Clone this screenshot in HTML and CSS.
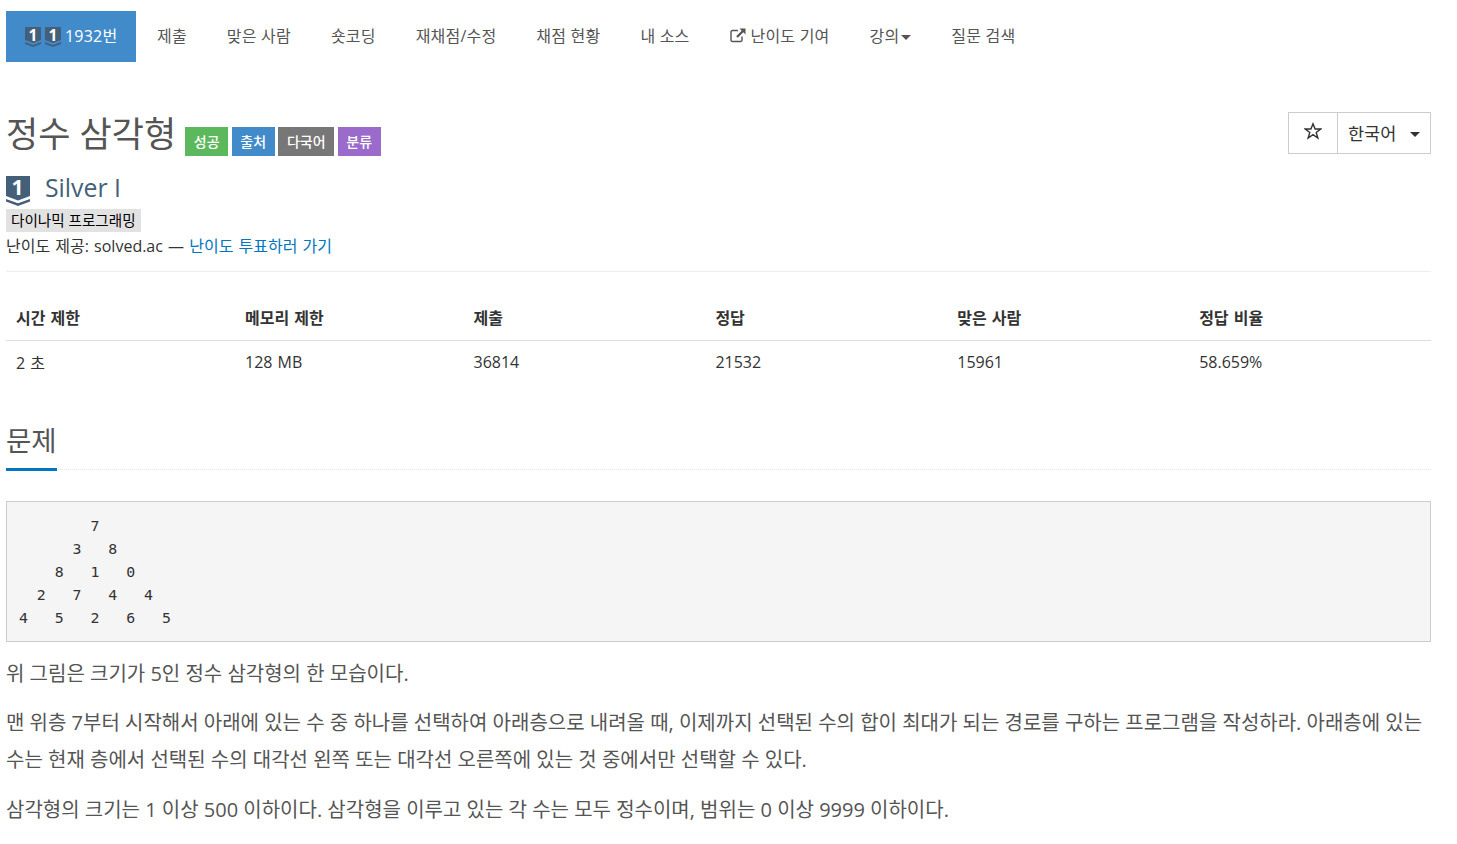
FILE: index.html
```html
<!DOCTYPE html>
<html lang="ko">
<head>
<meta charset="utf-8">
<title>정수 삼각형</title>
<link rel="stylesheet" href="styles.css">
</head>
<body>
<div class="page">
  <ul class="nav">
    <li class="nav-item active">
      <span class="tier small"><svg viewBox="0 0 16 20"><path class="tier-fill" d="M0 0H16V13L8 16L0 13Z"/><path class="tier-chev" d="M0 15L8 18L16 15V17L8 20L0 17Z"/></svg><span class="tier-num">1</span></span>
      <span class="tier small"><svg viewBox="0 0 16 20"><path class="tier-fill" d="M0 0H16V13L8 16L0 13Z"/><path class="tier-chev" d="M0 15L8 18L16 15V17L8 20L0 17Z"/></svg><span class="tier-num">1</span></span>
      <span>1932번</span>
    </li>
    <li class="nav-item">제출</li>
    <li class="nav-item">맞은 사람</li>
    <li class="nav-item">숏코딩</li>
    <li class="nav-item">재채점/수정</li>
    <li class="nav-item">채점 현황</li>
    <li class="nav-item">내 소스</li>
    <li class="nav-item"><svg class="ext" viewBox="0 0 16 16"><path d="M12 9.500V13.200A1.300 1.300 0 0 1 10.700 14.500H2.300A1.300 1.300 0 0 1 1 13.200V4.800A1.300 1.300 0 0 1 2.300 3.500H8" class="ext-line"/><path d="M9.500 1.500H15.500V7.500L13.300 5.300L7.800 10.800L6.200 9.200L11.700 3.700Z" class="ext-fill"/></svg>난이도 기여</li>
    <li class="nav-item">강의<span class="caret nav-caret"></span></li>
    <li class="nav-item">질문 검색</li>
  </ul>

  <header class="title-row">
    <div class="title-left">
      <h1 class="title">정수 삼각형</h1>
      <span class="label green">성공</span>
      <span class="label blue">출처</span>
      <span class="label gray">다국어</span>
      <span class="label purple">분류</span>
    </div>
    <div class="lang-group">
      <div class="star-btn"><svg class="star" viewBox="0 0 18 18"><path d="M9 1.800L11.100 7H16.700L12.200 10.400L13.900 16L9 12.700L4.100 16L5.800 10.400L1.300 7H6.900Z"/></svg></div>
      <div class="lang-btn">한국어<span class="caret lang-caret"></span></div>
    </div>
  </header>

  <div class="tier-row">
    <span class="tier large"><svg viewBox="0 0 24 30"><path class="tier-fill" d="M0 0H24V20L12 24.500L0 20Z"/><path class="tier-chev" d="M0 23L12 27.300L24 23V25.500L12 30L0 25.500Z"/></svg><span class="tier-num">1</span></span>
    <span class="tier-name">Silver I</span>
  </div>
  <div class="tag-row"><span class="tag">다이나믹 프로그래밍</span></div>
  <p class="credit">난이도 제공: solved.ac — <a class="link">난이도 투표하러 가기</a></p>

  <table class="stats">
    <thead>
      <tr><th>시간 제한</th><th>메모리 제한</th><th>제출</th><th>정답</th><th>맞은 사람</th><th>정답 비율</th></tr>
    </thead>
    <tbody>
      <tr><td>2 초</td><td>128 MB</td><td>36814</td><td>21532</td><td>15961</td><td>58.659%</td></tr>
    </tbody>
  </table>

  <section class="problem">
    <div class="headline"><h2>문제</h2></div>
    <pre class="triangle">        7
      3   8
    8   1   0
  2   7   4   4
4   5   2   6   5</pre>
    <p>위 그림은 크기가 5인 정수 삼각형의 한 모습이다.</p>
    <p>맨 위층 7부터 시작해서 아래에 있는 수 중 하나를 선택하여 아래층으로 내려올 때, 이제까지 선택된 수의 합이 최대가 되는 경로를 구하는 프로그램을 작성하라. 아래층에 있는 수는 현재 층에서 선택된 수의 대각선 왼쪽 또는 대각선 오른쪽에 있는 것 중에서만 선택할 수 있다.</p>
    <p class="last">삼각형의 크기는 1 이상 500 이하이다. 삼각형을 이루고 있는 각 수는 모두 정수이며, 범위는 0 이상 9999 이하이다.</p>
  </section>
</div>
</body>
</html>
```
FILE: styles.css
```css
* { box-sizing: border-box; }
html, body { margin: 0; padding: 0; background: #fff; }
body {
  font-family: "Open Sans", "Noto Sans CJK KR", sans-serif;
  font-size: 16px;
  word-spacing: 1px;
  color: #333;
  overflow: hidden;
}
.page { width: 1425px; margin-left: 6px; padding-top: 11px; }

.nav { display: flex; list-style: none; margin: 0; padding: 0; height: 51px; }
.nav-item { padding: 0 20px 4px; height: 51px; font-size: 16px; letter-spacing: .2px; word-spacing: 0; color: #555; white-space: nowrap; display: flex; align-items: center; }
.nav-item.active { background: #428bca; color: #fff; padding: 0 18.700px 4px 19px; margin-right: 1px; gap: 4px; }

.tier { display: block; position: relative; flex: none; letter-spacing: 0; }
.tier svg { display: block; width: 100%; height: 100%; }
.tier.small { width: 16px; height: 20px; margin-top: 4px; }
.tier.large { width: 24px; height: 30px; }
.tier-fill { fill: #435f7a; }
.tier-chev { fill: #435f7a; }
.tier-num { position: absolute; left: 0; right: 0; top: 0; text-align: center; color: #fff; font-weight: 700; word-spacing: 0; }
.small .tier-num { font-size: 15.500px; line-height: 16px; }
.large .tier-num { font-size: 21px; line-height: 23px; right: 1px; }

.ext { width: 16px; height: 16px; margin-right: 5px; }
.ext-line { fill: none; stroke: #555; stroke-width: 1.4; }
.ext-fill { fill: #555; }

.caret { display: inline-block; width: 0; height: 0; border-top: 5px solid #555; border-left: 5px solid transparent; border-right: 5px solid transparent; }
.nav-caret { margin-left: 2px; margin-top: 6px; }

.title-row { display: flex; justify-content: space-between; margin-top: 50px; height: 51px; }
.title-left { display: flex; align-items: flex-start; }
.title { margin: 0 9px 0 0; font-size: 35px; font-weight: 400; line-height: 44px; color: #555; word-spacing: 0; }
.label { display: block; margin-top: 15px; margin-right: 3.500px; height: 29px; line-height: 29px; padding: 0 8.500px; font-size: 14px; font-weight: 500; color: #fff; }
.green { background: #5cb85c; padding: 0 8.750px; }
.blue { background: #428bca; }
.gray { background: #777; padding: 0 8.750px; }
.purple { background: #9b6bcc; }
.lang-group { display: flex; height: 42px; border: 1px solid #ccc; }
.star-btn { width: 49px; display: flex; align-items: center; justify-content: center; border-right: 1px solid #ccc; padding-bottom: 4px; }
.star { width: 18px; height: 18px; fill: none; stroke: #333; stroke-width: 1.400; }
.lang-btn { width: 92px; padding-left: 10px; font-size: 17.500px; color: #333; display: flex; align-items: center; padding-bottom: 2px; }
.lang-caret { margin-left: 14px; margin-top: 4px; border-top-color: #333; }

.tier-row { display: flex; align-items: flex-start; height: 30px; margin-top: 13px; }
.tier-name { margin-left: 15px; font-size: 24.800px; color: #435f7a; line-height: 22px; word-spacing: 0; }
.tag-row { margin-top: 3px; height: 23px; }
.tag { display: inline-block; height: 23px; line-height: 23px; padding: 0 5px; background: #e2e2e2; color: #000; font-size: 14.600px; word-spacing: 0; }
.credit { margin: 2px 0 0; line-height: 24px; font-size: 16px; color: #333; padding-bottom: 13px; border-bottom: 1px solid #eee; }
.link { color: #0076c0; }

.stats { width: 100%; border-collapse: collapse; margin-top: 23px; table-layout: fixed; font-size: 16px; }
.stats th { text-align: left; font-weight: 700; padding: 10px; height: 45px; border-bottom: 1px solid #ddd; color: #333; }
.stats td { padding: 9px 10px 11px; height: 44px; color: #333; }
.stats th:nth-child(1) { width: 229px; }
.stats th:nth-child(2) { width: 228.500px; }

.problem { margin-top: 39px; }
.headline { border-bottom: 1px dotted #e5e5e5; height: 46px; }
.headline h2 { display: inline-block; margin: 0; height: 47px; font-size: 27.500px; font-weight: 400; line-height: 34px; color: #555; border-bottom: 3px solid #0076c0; }
.triangle { margin: 31px 0 0; height: 141px; padding: 13px 12px; background: #f5f5f5; border: 1px solid #ccc; font-family: "DejaVu Sans Mono", monospace; font-size: 14.850px; line-height: 23px; color: #333; word-spacing: 0; }
.problem p { margin: 0; font-size: 20px; line-height: 37px; color: #555; word-spacing: 0; }
.problem p + p { margin-top: 12px; }
.problem .triangle + p { margin-top: 13px; }
.problem p.last { margin-top: 13px; }
```
